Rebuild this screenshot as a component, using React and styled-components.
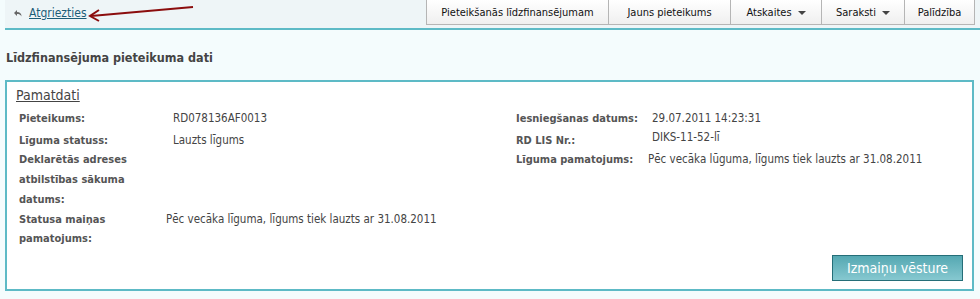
import React from "react";
import styled, { createGlobalStyle } from "styled-components";

const GlobalStyle = createGlobalStyle`
  html, body {
    margin: 0;
    padding: 0;
    background: #f4fcfd;
  }
  body {
    font-family: "DejaVu Sans Condensed", "DejaVu Sans", sans-serif;
    font-size: 11px;
    color: #333;
  }
`;

const Page = styled.div`
  width: 980px;
  height: 299px;
  overflow: hidden;
`;

const TopBar = styled.div`
  display: flex;
  align-items: flex-start;
  justify-content: space-between;
  height: 28px;
  margin-left: 5px;
  background: #eef5f7;
  border-bottom: 2px solid #5dbac6;
  position: relative;
`;

const BackLink = styled.div`
  display: flex;
  align-items: center;
  gap: 6px;
  padding: 6px 0 0 8px;
`;

const LinkText = styled.a`
  color: #1c5d78;
  text-decoration: underline;
  font-size: 12px;
  cursor: pointer;
`;

const Arrow = styled.svg`
  position: absolute;
  left: 80px;
  top: 2px;
`;

const Nav = styled.div`
  display: flex;
  margin-right: 5px;
`;

const NavButton = styled.div`
  display: flex;
  align-items: center;
  justify-content: center;
  gap: 6px;
  width: ${(p) => p.$w}px;
  height: 25px;
  box-sizing: border-box;
  border: 1px solid #b5b5b5;
  border-top: none;
  margin-left: -1px;
  background: linear-gradient(#ffffff, #efefef);
  color: #111;
  font-size: 11px;
`;

const Caret = styled.span`
  width: 0;
  height: 0;
  border-left: 4px solid transparent;
  border-right: 4px solid transparent;
  border-top: 4px solid #444;
  margin-top: 2px;
`;

const Title = styled.h2`
  margin: 20px 0 0 6px;
  font-size: 12.5px;
  font-weight: bold;
  color: #444;
  height: 22px;
`;

const Panel = styled.div`
  margin: 8px 6px 0 5px;
  height: 211px;
  box-sizing: border-box;
  border: 2px solid #5dbac6;
  background: #fff;
  padding: 5px 9px 0 9px;
  display: flex;
  flex-direction: column;
`;

const Legend = styled.div`
  font-size: 14px;
  color: #444;
  text-decoration: underline;
  margin-bottom: 6px;
`;

const Columns = styled.div`
  display: grid;
  grid-template-columns: 497px 1fr;
`;

const Field = styled.div`
  display: grid;
  grid-template-columns: ${(p) => p.$label}px 1fr;
  line-height: 19.7px;
  padding-left: 3px;
  &:first-child {
    margin-bottom: 2px;
  }
`;

const Label = styled.div`
  font-weight: bold;
  color: #555;
`;

const Value = styled.div`
  color: #444;
  font-size: 11.5px;
  margin-left: ${(p) => p.$shift || 0}px;
  position: relative;
  top: ${(p) => p.$up || 0}px;
`;

const Footer = styled.div`
  margin-top: auto;
  display: flex;
  justify-content: flex-end;
  padding-bottom: 8px;
`;

const HistoryButton = styled.button`
  width: 131px;
  height: 26px;
  border: 1px solid #256e78;
  background: linear-gradient(#55a8b2, #86c8d0);
  color: #fff;
  font-family: inherit;
  font-size: 14px;
  padding: 0;
`;

const BackIcon = () => (
  <svg width="10" height="9" viewBox="0 0 10 9">
    <path d="M4 1 L1 4 L4 7 L4 5 C6 5 7.5 5.5 8.5 7.5 C8.5 4.5 7 3 4 3 Z" fill="#666" />
  </svg>
);

const leftFields = [
  ["Pieteikums:", "RD078136AF0013"],
  ["Līguma statuss:", "Lauzts līgums"],
  ["Deklarētās adreses atbilstības sākuma datums:", ""],
  ["Statusa maiņas pamatojums:", "Pēc vecāka līguma, līgums tiek lauzts ar 31.08.2011", -7],
];

const rightFields = [
  ["Iesniegšanas datums:", "29.07.2011 14:23:31"],
  ["RD LIS Nr.:", "DIKS-11-52-lī", 0, -3],
  ["Līguma pamatojums:", "Pēc vecāka lūguma, līgums tiek lauzts ar 31.08.2011", -4],
];

const App = () => {
  return (
    <Page>
      <GlobalStyle />
      <TopBar>
        <BackLink>
          <BackIcon />
          <LinkText>Atgriezties</LinkText>
        </BackLink>
        <Arrow width="112" height="20" viewBox="0 0 112 20">
          <path d="M108 5 L6 14" stroke="#8b0d0d" strokeWidth="2" fill="none" />
          <path d="M14 8 L5 14 L14 19" stroke="#8b0d0d" strokeWidth="2" fill="none" />
        </Arrow>
        <Nav>
          <NavButton $w={183}>Pieteikšanās līdzfinansējumam</NavButton>
          <NavButton $w={123}>Jauns pieteikums</NavButton>
          <NavButton $w={92}>
            Atskaites <Caret />
          </NavButton>
          <NavButton $w={84}>
            Saraksti <Caret />
          </NavButton>
          <NavButton $w={71}>Palīdzība</NavButton>
        </Nav>
      </TopBar>
      <Title>Līdzfinansējuma pieteikuma dati</Title>
      <Panel>
        <Legend>Pamatdati</Legend>
        <Columns>
          <div>
            {leftFields.map(([l, v, shift]) => (
              <Field key={l} $label={154}>
                <Label>{l}</Label>
                <Value $shift={shift}>{v}</Value>
              </Field>
            ))}
          </div>
          <div>
            {rightFields.map(([l, v, shift, up]) => (
              <Field key={l} $label={136}>
                <Label>{l}</Label>
                <Value $shift={shift} $up={up}>
                  {v}
                </Value>
              </Field>
            ))}
          </div>
        </Columns>
        <Footer>
          <HistoryButton>Izmaiņu vēsture</HistoryButton>
        </Footer>
      </Panel>
    </Page>
  );
};

export default App;
